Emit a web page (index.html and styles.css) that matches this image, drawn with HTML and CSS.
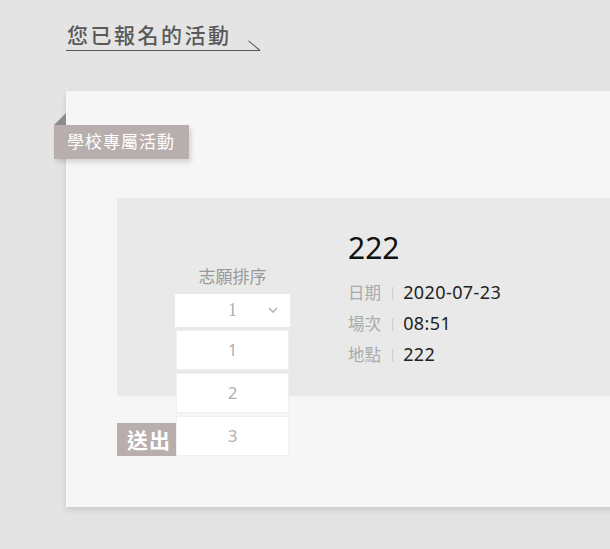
FILE: index.html
```html
<!DOCTYPE html>
<html lang="zh-Hant">
<head>
<meta charset="utf-8">
<link rel="stylesheet" href="styles.css">
</head>
<body>
<div class="page">
  <h2 class="page-title"><span class="title-text">您已報名的活動</span></h2>
  <section class="card">
    <div class="ribbon">學校專屬活動</div>
    <div class="event">
      <div class="rank">
        <div class="rank-label">志願排序</div>
        <div class="select">
          <span class="select-value">1</span>
          <svg class="chevron" width="10" height="6" viewBox="0 0 10 6"><path d="M1 1 L5 5 L9 1" fill="none" stroke="#b5b5b5" stroke-width="1.6"/></svg>
          <ul class="options">
            <li>1</li>
            <li>2</li>
            <li>3</li>
          </ul>
        </div>
      </div>
      <div class="info">
        <div class="event-name">222</div>
        <div class="row"><span class="label">日期</span><span class="sep">|</span><span class="value">2020-07-23</span></div>
        <div class="row"><span class="label">場次</span><span class="sep">|</span><span class="value">08:51</span></div>
        <div class="row"><span class="label">地點</span><span class="sep">|</span><span class="value">222</span></div>
      </div>
    </div>
    <button class="submit">送出</button>
  </section>
</div>
</body>
</html>
```

FILE: styles.css
```css
html, body {
  margin: 0;
  padding: 0;
  background: #e4e4e4;
  overflow: hidden;
  font-family: "Noto Sans", "Noto Sans CJK TC", sans-serif;
}
.page {
  width: 610px;
  height: 549px;
  padding-left: 66px;
  box-sizing: border-box;
}
.page-title {
  margin: 0;
  padding-top: 20px;
  font-weight: 500;
  font-size: 21px;
  line-height: 28px;
}
.title-text {
  display: inline-block;
  position: relative;
  color: #595959;
  letter-spacing: 2.5px;
  padding-left: 1px;
  padding-right: 28px;
  border-bottom: 1px solid #555;
  line-height: 30px;
}
.title-text::after {
  content: "";
  position: absolute;
  right: 0;
  bottom: -1px;
  width: 15px;
  height: 1px;
  background: #555;
  transform: rotate(40deg);
  transform-origin: right center;
}
.card {
  position: relative;
  margin-top: 40px;
  width: 600px;
  height: 416px;
  background: #f6f6f6;
  box-shadow: 0 3px 6px rgba(0,0,0,0.12);
  padding: 107px 0 0 51px;
  box-sizing: border-box;
}
.ribbon {
  position: absolute;
  left: -12px;
  top: 34px;
  width: 135px;
  height: 34px;
  background: #b9aeae;
  color: #fff;
  font-size: 17px;
  line-height: 34px;
  padding-left: 13px;
  box-sizing: border-box;
  letter-spacing: 1px;
  box-shadow: 2px 3px 5px rgba(0,0,0,0.15);
}
.ribbon::before {
  content: "";
  position: absolute;
  left: 0;
  top: -12px;
  border-style: solid;
  border-width: 0 0 12px 12px;
  border-color: transparent transparent #8c8c8c transparent;
}
.event {
  display: flex;
  background: #e9e9e9;
  height: 198px;
  padding-left: 58px;
  box-sizing: border-box;
}
.rank {
  width: 115px;
  padding-top: 67px;
  display: flex;
  flex-direction: column;
  align-items: center;
}
.rank-label {
  color: #999;
  font-size: 17px;
  line-height: 23px;
  margin-bottom: 6px;
}
.select {
  position: relative;
  width: 115px;
  height: 33px;
  background: #fff;
  display: flex;
  align-items: center;
  justify-content: center;
  z-index: 2;
}
.select-value {
  font-family: "Liberation Serif", serif;
  color: #b0b0b0;
  font-size: 18px;
}
.chevron {
  position: absolute;
  right: 12px;
  top: 13px;
}
.options {
  position: absolute;
  left: 1px;
  top: 36px;
  width: 113px;
  margin: 0;
  padding: 0;
  list-style: none;
}
.options li {
  height: 40px;
  margin-bottom: 3px;
  background: #fff;
  border: 1px solid #f0f0f0;
  box-sizing: border-box;
  color: #b0b0b0;
  font-size: 17px;
  line-height: 38px;
  text-align: center;
}
.info {
  margin-left: 58px;
  padding-top: 30px;
}
.event-name {
  font-size: 30px;
  line-height: 40px;
  color: #111;
  margin-bottom: 9px;
}
.row {
  font-size: 16px;
  line-height: 31px;
  display: flex;
  align-items: center;
}
.label {
  color: #aaa;
  font-size: 16.5px;
}
.sep {
  color: #ccc;
  font-size: 13px;
  margin: 0 7px 0 8px;
}
.value {
  color: #222;
  font-size: 18px;
  letter-spacing: 0.4px;
}
.submit {
  margin-top: 27px;
  width: 80px;
  height: 33px;
  border: none;
  background: #b9aeae;
  color: #fff;
  font-family: "Noto Sans CJK TC", sans-serif;
  font-size: 21px;
  font-weight: bold;
  text-align: left;
  padding: 0 0 0 10px;
  letter-spacing: 1px;
  line-height: 33px;
}
```
